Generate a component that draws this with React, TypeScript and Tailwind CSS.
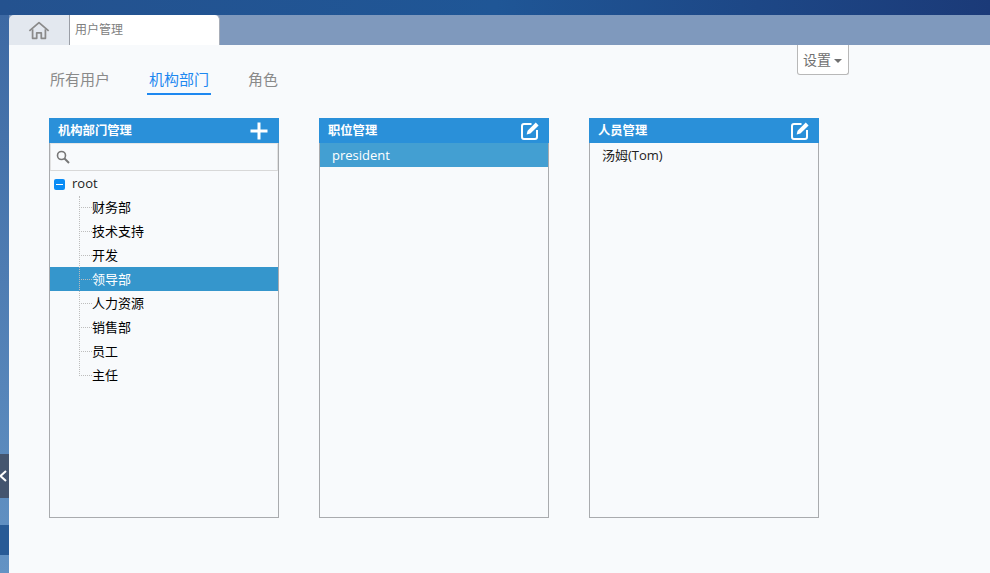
import React from 'react';

const font = { fontFamily: '"Open Sans", "Noto Sans CJK SC", sans-serif' };

const departments = ['财务部', '技术支持', '开发', '领导部', '人力资源', '销售部', '员工', '主任'];

const EditIcon = () => (
  <svg width="18" height="18" viewBox="0 0 18 18" fill="none">
    <path d="M10.5 2H3a2 2 0 0 0-2 2v11a2 2 0 0 0 2 2h11a2 2 0 0 0 2-2V8" stroke="white" strokeWidth="2" />
    <path d="M14.8 0.6l2.8 2.8-8.2 8.2-3.8 1 1-3.8z" fill="white" />
  </svg>
);

const PlusIcon = () => (
  <svg width="18" height="18" viewBox="0 0 18 18">
    <path d="M7.5 0.5h3v7h7v3h-7v7h-3v-7h-7v-3h7z" fill="white" />
  </svg>
);

const Panel = ({ title, icon, children }: { title: string; icon: React.ReactNode; children: React.ReactNode }) => (
  <div className="w-[230px] h-[400px] border border-t-0 border-[#a9abae] flex flex-col">
    <div className="h-[25px] -mx-px flex items-center justify-between pl-[9px] pr-[10px] bg-[#2a90d9] text-white text-[12.3px] font-bold shrink-0">
      <span className="pt-[2px]">{title}</span>
      {icon}
    </div>
    {children}
  </div>
);

const App = () => {
  return (
    <div className="w-[990px] h-[573px] flex flex-col overflow-hidden relative bg-[#4a76ad]" style={font}>
      <div className="h-[15px] shrink-0 bg-gradient-to-r from-[#24528f] via-[#1f5696] to-[#1b3a78]"></div>
      <div className="flex flex-1 min-h-0">
        {/* left strip */}
        <div className="w-[9px] shrink-0 flex flex-col bg-gradient-to-b from-[#3d69a3] to-[#6393c4]">
          <div className="h-[510px] shrink-0"></div>
          <div className="h-[30px] shrink-0 bg-[#285b96]"></div>
        </div>

        <div className="flex-1 flex flex-col min-w-0">
          {/* tab strip */}
          <div className="h-[30px] shrink-0 flex bg-[#7f99bd]">
            <div className="w-[60px] flex items-center justify-center bg-[#e3e8ef] rounded-tl-[5px]">
              <svg width="22" height="19" viewBox="0 0 24 20" fill="none" stroke="#8a8a8a" strokeWidth="1.9" strokeLinejoin="round">
                <path d="M1.5 10.5L12 1.5l10.5 9" />
                <path d="M5 8.5v10h4.5v-6h5v6H19v-10" />
              </svg>
            </div>
            <div className="w-px bg-[#9a9ea6]"></div>
            <div className="w-[150px] flex items-center pl-[5px] bg-white rounded-tr-[5px] text-[12px] text-[#808080] border-r border-[#a7adb8]">
              用户管理
            </div>
          </div>

          {/* content */}
          <div className="flex-1 bg-[#f8fafc] pl-[40px] relative">
            <button className="absolute left-[788px] top-0 w-[52px] h-[30px] flex items-center pl-[5px] gap-[3px] bg-white border border-t-0 border-[#b8b8b8] rounded-b-[3px] text-[14px] text-[#707070]">
              设置
              <span className="w-0 h-0 border-x-[4px] border-x-transparent border-t-[4px] border-t-[#707070] mt-[2px]"></span>
            </button>

            <div className="flex h-[50px] text-[15px] text-[#8a8a8a] items-start pt-[24px]">
              <div className="w-[98px] pl-px h-[26px] leading-[20px]">所有用户</div>
              <div className="w-[64px] h-[26px] text-center leading-[20px] text-[#1e88f0] border-b-2 border-[#1e88f0]">机构部门</div>
              <div className="pl-[37px] leading-[20px]">角色</div>
            </div>

            <div className="flex gap-[40px] mt-[23px]">
              <Panel title="机构部门管理" icon={<span className="mr-px"><PlusIcon /></span>}>
                <div className="h-[28px] flex items-center pl-[5px] border border-t-[#e6e6e6] border-x-[#e2e2e2] border-b-[#d8d8d8] shrink-0">
                  <svg width="14" height="14" viewBox="0 0 14 14" fill="none" stroke="#777" strokeWidth="1.6">
                    <circle cx="5.5" cy="5.5" r="4" />
                    <path d="M8.5 8.5L13 13" strokeWidth="2" />
                  </svg>
                </div>
                <div className="relative">
                  <div className="h-[24px] pt-[2px] flex items-center text-[13px] text-[#222]">
                    <span className="ml-[4px] mr-[7px] w-[11px] h-[11px] rounded-[2px] bg-[#0a8cf5] flex items-center justify-center">
                      <span className="w-[7px] h-px bg-white"></span>
                    </span>
                    root
                  </div>
                  {departments.map((d) => (
                    <div
                      key={d}
                      className={
                        d === '领导部'
                          ? 'h-[24px] pt-[1px] flex items-center bg-[#3596cc] text-white text-[13px]'
                          : 'h-[24px] pt-[1px] flex items-center text-black text-[13px]'
                      }
                    >
                      <span className="ml-[29px] w-[13px] border-t border-dotted border-[#bdbdbd]"></span>
                      {d}
                    </div>
                  ))}
                  <div className="absolute left-[29px] top-[25px] h-[180px] border-l border-dotted border-[#bdbdbd]"></div>
                </div>
              </Panel>

              <Panel title="职位管理" icon={<EditIcon />}>
                <div className="h-[24px] pt-[2px] flex items-center pl-[12px] bg-[#439fd2] text-white text-[13px]">president</div>
              </Panel>

              <Panel title="人员管理" icon={<EditIcon />}>
                <div className="h-[24px] pt-[2px] flex items-center pl-[12px] text-[#222] text-[13px]">汤姆(Tom)</div>
              </Panel>
            </div>
          </div>
        </div>
      </div>

      {/* collapse handle */}
      <div className="absolute left-0 top-[454px] w-[9px] h-[44px] bg-[#44556f] flex items-center overflow-hidden">
        <svg width="7" height="12" viewBox="0 0 7 12" fill="none" stroke="white" strokeWidth="2">
          <path d="M6 1L0.5 6 6 11" />
        </svg>
      </div>
    </div>
  );
};

export default App;
